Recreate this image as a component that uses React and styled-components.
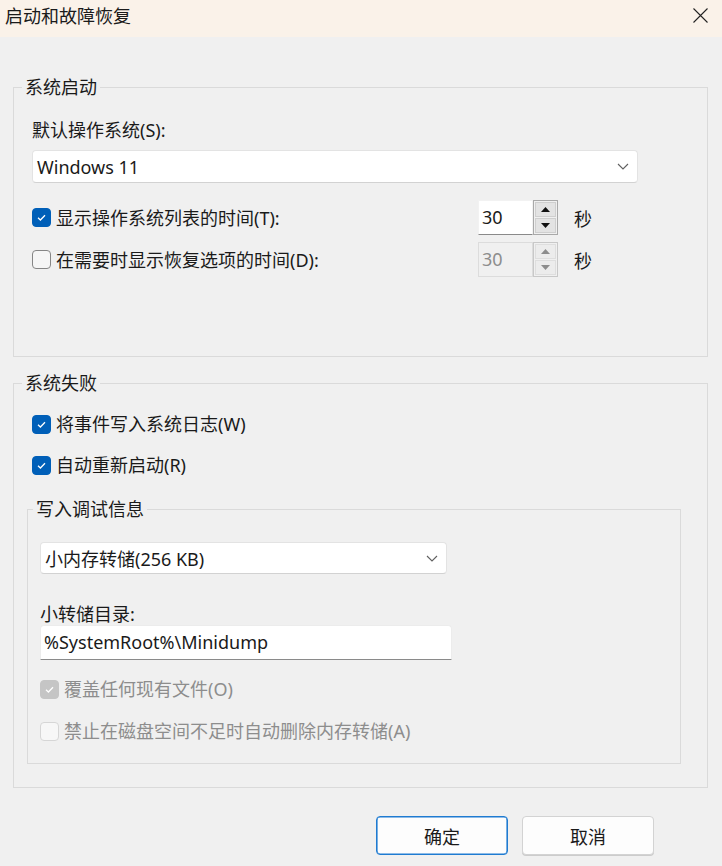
import styled, { createGlobalStyle } from "styled-components";

const GlobalStyle = createGlobalStyle`
  body {
    margin: 0;
    background: #f0f0f0;
    font-family: "Noto Sans", "Noto Sans CJK SC", sans-serif;
    color: #1a1a1a;
  }
`;

const Window = styled.div`
  width: 722px;
  height: 866px;
  background: #f0f0f0;
  display: flex;
  flex-direction: column;
  overflow: hidden;
`;

const TitleBar = styled.div`
  height: 37px;
  flex-shrink: 0;
  background: #faf2e9;
  display: flex;
  align-items: center;
  justify-content: space-between;
  padding: 0 14px 6px 5px;
  box-sizing: border-box;
`;

const Title = styled.span`
  font-size: 18px;
  line-height: 22px;
  color: #1b1b1b;
`;

const Content = styled.div`
  padding: 40px 14px 0 13px;
`;

const Group = styled.fieldset`
  margin: ${(p) => p.$margin || "0"};
  padding: 0;
  border: 1px solid #dadada;
  min-width: 0;
`;

const Legend = styled.legend`
  margin-left: ${(p) => p.$offset || 8}px;
  padding: 0 3px;
  font-size: 18px;
  line-height: 20px;
`;

const GroupBody = styled.div`
  padding: ${(p) => p.$pad};
  display: flex;
  flex-direction: column;
`;

const FieldLabel = styled.div`
  font-size: 18px;
  line-height: 20px;
  margin-top: ${(p) => p.$top || 0}px;
`;

const SelectBox = styled.div`
  width: ${(p) => p.$width}px;
  height: ${(p) => p.$height}px;
  margin-top: ${(p) => p.$top || 0}px;
  box-sizing: border-box;
  background: #ffffff;
  border: 1px solid #e3e3e3;
  border-bottom-color: #d2d2d2;
  border-radius: 4px;
  display: flex;
  align-items: center;
  justify-content: space-between;
  padding: 0 8px 0 4px;
  font-size: 18px;
`;

const TextBox = styled.div`
  width: ${(p) => p.$width}px;
  height: 35px;
  margin-top: ${(p) => p.$top || 0}px;
  box-sizing: border-box;
  background: #ffffff;
  border: 1px solid #ececec;
  border-bottom: 1.5px solid #8a8a8a;
  border-radius: 4px 4px 0 0;
  display: flex;
  align-items: center;
  padding: 0 3px 2px;
  font-size: 18px;
`;

const Row = styled.div`
  display: flex;
  align-items: center;
  margin-top: ${(p) => p.$top || 0}px;
`;

const CheckRow = styled.div`
  display: flex;
  align-items: center;
  gap: 5px;
  height: 24px;
  width: ${(p) => (p.$width ? `${p.$width}px` : "auto")};
  margin-top: ${(p) => p.$top || 0}px;
  color: ${(p) => (p.$disabled ? "#8d8d8d" : "#1a1a1a")};
  font-size: 18px;
  line-height: 24px;
`;

const Box = styled.span`
  width: 19px;
  height: 19px;
  box-sizing: border-box;
  border-radius: 4px;
  flex-shrink: 0;
  display: flex;
  align-items: center;
  justify-content: center;
  background: ${(p) =>
    p.$checked ? (p.$disabled ? "#c5c5c5" : "#005fb8") : p.$disabled ? "#f7f7f7" : "#f6f6f6"};
  border: 1px solid
    ${(p) =>
      p.$checked ? (p.$disabled ? "#c5c5c5" : "#005fb8") : p.$disabled ? "#d6d6d6" : "#868686"};
`;

const Spin = styled.div`
  display: flex;
  width: 80px;
  height: 35px;
`;

const SpinInput = styled.div`
  width: 55px;
  box-sizing: border-box;
  background: ${(p) => (p.$disabled ? "#f0f0f0" : "#ffffff")};
  border: 1px solid ${(p) => (p.$disabled ? "#dcdcdc" : "#f2f2f2")};
  border-bottom: 1px solid ${(p) => (p.$disabled ? "#dcdcdc" : "#8a8a8a")};
  color: ${(p) => (p.$disabled ? "#8d8d8d" : "#1a1a1a")};
  font-size: 18px;
  display: flex;
  align-items: center;
  padding: 0 0 2px 3px;
`;

const SpinButtons = styled.div`
  width: 25px;
  box-sizing: border-box;
  border: 1px solid ${(p) => (p.$disabled ? "#c8c8c8" : "#a9a9a9")};
  background: #f0f0f0;
  display: flex;
  flex-direction: column;
  gap: 1px;
  padding: 1px;
`;

const SpinButton = styled.div`
  flex: 1;
  background: ${(p) => (p.$disabled ? "#ececec" : "#e3e3e3")};
  border: 1px solid ${(p) => (p.$disabled ? "#dedede" : "#cfcfcf")};
  display: flex;
  align-items: center;
  justify-content: center;
`;

const Unit = styled.span`
  margin-left: 16px;
  font-size: 18px;
`;

const ButtonRow = styled.div`
  display: flex;
  justify-content: flex-end;
  gap: 14px;
  margin-top: 28px;
  padding-right: 54px;
`;

const Button = styled.button`
  width: 132px;
  height: 39px;
  box-sizing: border-box;
  background: #fdfdfd;
  border: 1px solid ${(p) => (p.$primary ? "#1f7bd1" : "#d3d3d3")};
  box-shadow: ${(p) => (p.$primary ? "inset 0 0 0 0.6px #1f7bd1" : "0 1px 0 #cccccc")};
  border-radius: 4px;
  font-family: inherit;
  font-size: 18px;
  color: #1a1a1a;
  padding: 0;
`;

const Check = ({ checked, disabled }) => (
  <Box $checked={checked} $disabled={disabled}>
    {checked && (
      <svg width="13" height="13" viewBox="0 0 13 13">
        <path d="M3 6.8 L5.4 9 L10 4.2" fill="none" stroke="#fff" strokeWidth="1.3" />
      </svg>
    )}
  </Box>
);

const Chevron = () => (
  <svg width="12" height="7" viewBox="0 0 12 7">
    <path d="M1 1 L6 6 L11 1" fill="none" stroke="#606060" strokeWidth="1.1" />
  </svg>
);

const Arrow = ({ up, disabled }) => (
  <svg width="9" height="5" viewBox="0 0 9 5">
    <path d={up ? "M0 5 L4.5 0 L9 5 Z" : "M0 0 L4.5 5 L9 0 Z"} fill={disabled ? "#8d8d8d" : "#111"} />
  </svg>
);

const Spinner = ({ value, disabled }) => (
  <Spin>
    <SpinInput $disabled={disabled}>{value}</SpinInput>
    <SpinButtons $disabled={disabled}>
      <SpinButton $disabled={disabled}>
        <Arrow up disabled={disabled} />
      </SpinButton>
      <SpinButton $disabled={disabled}>
        <Arrow disabled={disabled} />
      </SpinButton>
    </SpinButtons>
  </Spin>
);

const App = () => {
  return (
    <Window>
      <GlobalStyle />
      <TitleBar>
        <Title>启动和故障恢复</Title>
        <svg width="15" height="15" viewBox="0 0 15 15">
          <path d="M0.5 0.5 L14.5 14.5 M14.5 0.5 L0.5 14.5" stroke="#222" strokeWidth="1.1" />
        </svg>
      </TitleBar>
      <Content>
        <Group>
          <Legend>系统启动</Legend>
          <GroupBody $pad="23px 69px 79px 18px">
            <FieldLabel>默认操作系统(S):</FieldLabel>
            <SelectBox $width={606} $height={33} $top={10}>
              <span>Windows 11</span>
              <Chevron />
            </SelectBox>
            <Row $top={17}>
              <CheckRow $width={446}>
                <Check checked />
                <span>显示操作系统列表的时间(T):</span>
              </CheckRow>
              <Spinner value="30" />
              <Unit>秒</Unit>
            </Row>
            <Row $top={7}>
              <CheckRow $width={446}>
                <Check />
                <span>在需要时显示恢复选项的时间(D):</span>
              </CheckRow>
              <Spinner value="30" disabled />
              <Unit>秒</Unit>
            </Row>
          </GroupBody>
        </Group>

        <Group $margin="16px 0 0 0">
          <Legend>系统失败</Legend>
          <GroupBody $pad="19px 26px 23px 18px">
            <CheckRow>
              <Check checked />
              <span>将事件写入系统日志(W)</span>
            </CheckRow>
            <CheckRow $top={17}>
              <Check checked />
              <span>自动重新启动(R)</span>
            </CheckRow>
            <Group $margin="22px 0 0 -5px">
              <Legend $offset={5}>写入调试信息</Legend>
              <GroupBody $pad="23px 0 20px 12px">
                <SelectBox $width={407} $height={32}>
                  <span>小内存转储(256 KB)</span>
                  <Chevron />
                </SelectBox>
                <FieldLabel $top={30}>小转储目录:</FieldLabel>
                <TextBox $width={412} $top={1}>
                  {"%SystemRoot%\\Minidump"}
                </TextBox>
                <CheckRow $top={17} $disabled>
                  <Check checked disabled />
                  <span>覆盖任何现有文件(O)</span>
                </CheckRow>
                <CheckRow $top={18} $disabled>
                  <Check disabled />
                  <span>禁止在磁盘空间不足时自动删除内存转储(A)</span>
                </CheckRow>
              </GroupBody>
            </Group>
          </GroupBody>
        </Group>

        <ButtonRow>
          <Button $primary>确定</Button>
          <Button>取消</Button>
        </ButtonRow>
      </Content>
    </Window>
  );
};

export default App;
